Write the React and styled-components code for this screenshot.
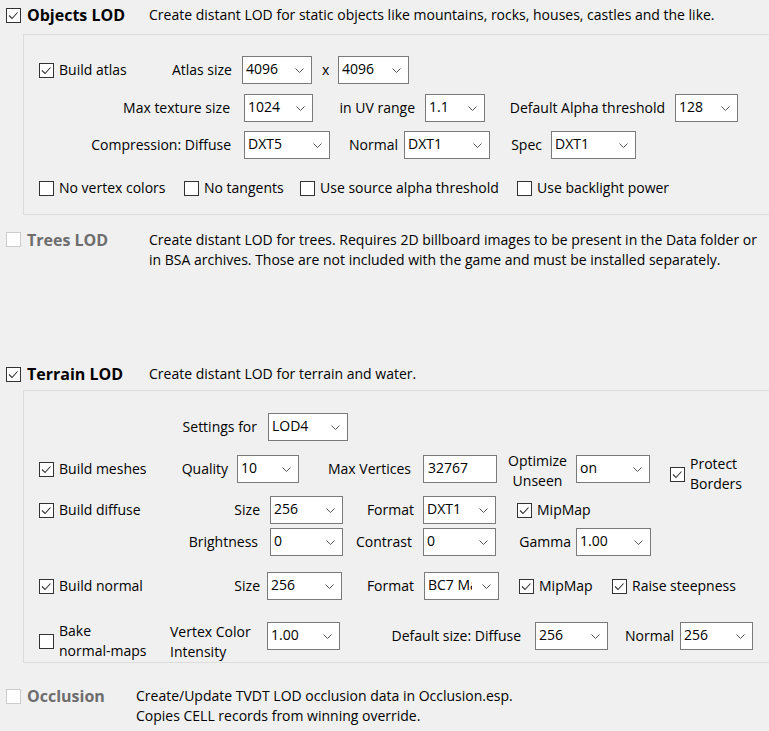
import React from "react";
import styled, { createGlobalStyle, css } from "styled-components";

const GlobalStyle = createGlobalStyle`
  html, body { margin: 0; padding: 0; background: #f0f0f0; }
  body {
    font-family: "Open Sans", "Noto Sans", sans-serif;
    font-size: 14px;
    color: #000;
    overflow: hidden;
  }
`;

const Page = styled.div`
  width: 769px;
  height: 731px;
  background: #f0f0f0;
  overflow: hidden;
`;

const SectionHeader = styled.div`
  display: flex;
  align-items: ${(p) => (p.$top ? "flex-start" : "center")};
  padding-left: 6px;
  margin-top: ${(p) => p.$mt || 0}px;
  height: ${(p) => (p.$h ? `${p.$h}px` : "auto")};
  white-space: nowrap;
`;

const Title = styled.div`
  flex-shrink: 0;
  width: ${(p) => p.$w}px;
  margin-left: 6px;
  font-size: 16px;
  font-weight: 700;
  line-height: 20px;
  color: ${(p) => (p.$disabled ? "#6d6d6d" : "#000")};
`;

const Description = styled.div`
  line-height: 20px;
  white-space: nowrap;
`;

const BoxFrame = styled.span`
  flex-shrink: 0;
  box-sizing: border-box;
  width: 15px;
  height: 15px;
  margin-top: ${(p) => p.$mt || 0}px;
  border: 1px solid ${(p) => (p.$disabled ? "#cccccc" : "#333333")};
  background: #fff;
  display: flex;
  align-items: center;
  justify-content: center;
`;

const CheckBox = ({ checked, disabled, mt }) => (
  <BoxFrame $disabled={disabled} $mt={mt}>
    {checked && (
      <svg width="13" height="13" viewBox="0 0 13 13">
        <polyline points="2,6.5 5,9.5 10.5,3.5" fill="none" stroke="#333" strokeWidth="1.1" />
      </svg>
    )}
  </BoxFrame>
);

const GroupBox = styled.div`
  margin-left: 23px;
  margin-top: ${(p) => p.$mt}px;
  padding-top: ${(p) => p.$pt}px;
  padding-bottom: ${(p) => p.$pb}px;
  border: 1px solid #dcdcdc;
  border-right: none;
`;

const Row = styled.div`
  display: flex;
  align-items: ${(p) => (p.$top ? "flex-start" : "center")};
  height: ${(p) => p.$h || 28}px;
  margin-top: ${(p) => p.$mt || 0}px;
  white-space: nowrap;
`;

const Label = styled.div`
  flex-shrink: 0;
  display: flex;
  flex-direction: column;
  align-items: ${(p) =>
    p.$align === "left" ? "flex-start" : p.$align === "center" ? "center" : "flex-end"};
  justify-content: center;
  text-align: ${(p) => p.$align || "right"};
  width: ${(p) => p.$w}px;
  margin-left: ${(p) => p.$ml || 0}px;
  margin-top: ${(p) => p.$mt || 0}px;
  min-height: ${(p) => (p.$tall ? 28 : 0)}px;
  line-height: 20px;
`;

const fieldBox = css`
  flex-shrink: 0;
  box-sizing: border-box;
  height: 28px;
  width: ${(p) => p.$w}px;
  margin-left: ${(p) => p.$ml || 0}px;
  margin-top: ${(p) => p.$mt || 0}px;
  border: 1px solid #7a7a7a;
  background: #fff;
  display: flex;
  align-items: center;
`;

const SelectBox = styled.div`
  ${fieldBox};
  padding-left: 3px;
  position: relative;
`;

const SelectValue = styled.span`
  display: block;
  overflow: hidden;
  width: calc(100% - 26px);
  white-space: nowrap;
  line-height: 20px;
  margin-top: -2px;
`;

const Chevron = styled.svg`
  position: absolute;
  right: 7px;
  top: 11px;
`;

const Select = ({ value, w, ml, mt }) => (
  <SelectBox $w={w} $ml={ml} $mt={mt}>
    <SelectValue>{value}</SelectValue>
    <Chevron width="9" height="5" viewBox="0 0 9 5">
      <polyline points="0.5,0.5 4.5,4.5 8.5,0.5" fill="none" stroke="#555" strokeWidth="1" />
    </Chevron>
  </SelectBox>
);

const TextBox = styled.div`
  ${fieldBox};
  padding-left: 4px;
  line-height: 20px;
  & > span { margin-top: -2px; }
`;

const CheckLabel = styled.label`
  flex-shrink: 0;
  display: flex;
  align-items: ${(p) => (p.$top ? "flex-start" : "center")};
  gap: 5px;
  width: ${(p) => (p.$w ? `${p.$w}px` : "auto")};
  margin-left: ${(p) => p.$ml || 0}px;
  margin-top: ${(p) => p.$mt || 0}px;
  line-height: 20px;
`;

const CheckText = styled.span`
  display: flex;
  flex-direction: column;
`;

const CheckItem = ({ children, w, ml, mt, checked, boxMt, top }) => (
  <CheckLabel $w={w} $ml={ml} $mt={mt} $top={top}>
    <CheckBox checked={checked} mt={boxMt} />
    <CheckText>{children}</CheckText>
  </CheckLabel>
);

export default function App() {
  return (
    <Page>
      <GlobalStyle />

      <SectionHeader $mt={3} $h={24}>
        <CheckBox checked />
        <Title $w={122}>Objects LOD</Title>
        <Description>
          Create distant LOD for static objects like mountains, rocks, houses, castles and the like.
        </Description>
      </SectionHeader>

      <GroupBox $mt={7} $pt={21} $pb={12}>
        <Row>
          <CheckItem ml={15} w={100} checked>Build atlas</CheckItem>
          <Label $w={93}>Atlas size</Label>
          <Select ml={10} w={70} value="4096" />
          <Label $ml={10} $w={8} $align="left">x</Label>
          <Select ml={8} w={71} value="4096" />
        </Row>
        <Row $mt={10}>
          <Label $w={206}>Max texture size</Label>
          <Select ml={14} w={69} value="1024" />
          <Label $ml={25} $w={77}>in UV range</Label>
          <Select ml={10} w={60} value="1.1" />
          <Label $ml={22} $w={158}>Default Alpha threshold</Label>
          <Select ml={10} w={63} value="128" />
        </Row>
        <Row $mt={9}>
          <Label $w={207}>Compression: Diffuse</Label>
          <Select ml={13} w={86} value="DXT5" />
          <Label $ml={19} $w={49}>Normal</Label>
          <Select ml={6} w={86} value="DXT1" />
          <Label $ml={20} $w={32}>Spec</Label>
          <Select ml={9} w={85} value="DXT1" />
        </Row>
        <Row $mt={15}>
          <CheckItem ml={15} w={145}>No vertex colors</CheckItem>
          <CheckItem w={116}>No tangents</CheckItem>
          <CheckItem w={217}>Use source alpha threshold</CheckItem>
          <CheckItem>Use backlight power</CheckItem>
        </Row>
      </GroupBox>

      <SectionHeader $mt={15} $top>
        <CheckBox disabled mt={2} />
        <Title $w={122} $disabled>Trees LOD</Title>
        <Description>
          Create distant LOD for trees. Requires 2D billboard images to be present in the Data folder or
          <br />
          in BSA archives. Those are not included with the game and must be installed separately.
        </Description>
      </SectionHeader>

      <SectionHeader $mt={92} $h={24}>
        <CheckBox checked />
        <Title $w={122}>Terrain LOD</Title>
        <Description>Create distant LOD for terrain and water.</Description>
      </SectionHeader>

      <GroupBox $mt={4} $pt={22} $pb={1}>
        <Row>
          <Label $w={233}>Settings for</Label>
          <Select ml={11} w={80} value="LOD4" />
        </Row>
        <Row $mt={14}>
          <CheckItem ml={15} w={142} checked>Build meshes</CheckItem>
          <Label $w={47}>Quality</Label>
          <Select ml={9} w={62} value="10" />
          <Label $ml={29} $w={83}>Max Vertices</Label>
          <TextBox $ml={12} $w={74}><span>32767</span></TextBox>
          <Label $ml={10} $w={61} $align="center" $mt={4}>
            <span>Optimize</span>
            <span>Unseen</span>
          </Label>
          <Select ml={8} w={74} value="on" />
          <CheckItem ml={20} mt={10} checked>
            <span>Protect</span>
            <span>Borders</span>
          </CheckItem>
        </Row>
        <Row $mt={13}>
          <CheckItem ml={15} w={142} checked>Build diffuse</CheckItem>
          <Label $w={79}>Size</Label>
          <Select ml={10} w={73} value="256" />
          <Label $ml={24} $w={47}>Format</Label>
          <Select ml={9} w={73} value="DXT1" />
          <CheckItem ml={21} checked>MipMap</CheckItem>
        </Row>
        <Row $mt={4}>
          <Label $w={234}>Brightness</Label>
          <Select ml={12} w={73} value="0" />
          <Label $ml={14} $w={55}>Contrast</Label>
          <Select ml={11} w={73} value="0" />
          <Label $ml={23} $w={52}>Gamma</Label>
          <Select ml={5} w={75} value="1.00" />
        </Row>
        <Row $mt={16}>
          <CheckItem ml={15} w={142} checked>Build normal</CheckItem>
          <Label $w={79}>Size</Label>
          <Select ml={7} w={75} value="256" />
          <Label $ml={25} $w={47}>Format</Label>
          <Select ml={10} w={75} value="BC7 Max" />
          <CheckItem ml={20} w={93} checked>MipMap</CheckItem>
          <CheckItem checked>Raise steepness</CheckItem>
        </Row>
        <Row $mt={21} $h={40} $top>
          <CheckItem ml={15} w={131}>
            <span>Bake</span>
            <span>normal-maps</span>
          </CheckItem>
          <Label $w={97} $align="left" $mt={1}>
            <span>Vertex Color</span>
            <span>Intensity</span>
          </Label>
          <Select mt={1} w={73} value="1.00" />
          <Label $ml={51} $w={130} $mt={1} $tall>Default size: Diffuse</Label>
          <Select ml={14} mt={1} w={73} value="256" />
          <Label $ml={17} $w={49} $mt={1} $tall>Normal</Label>
          <Select ml={6} mt={1} w={73} value="256" />
        </Row>
      </GroupBox>

      <SectionHeader $mt={23} $top>
        <CheckBox disabled mt={3} />
        <Title $w={109} $disabled>Occlusion</Title>
        <Description>
          Create/Update TVDT LOD occlusion data in Occlusion.esp.
          <br />
          Copies CELL records from winning override.
        </Description>
      </SectionHeader>
    </Page>
  );
}
